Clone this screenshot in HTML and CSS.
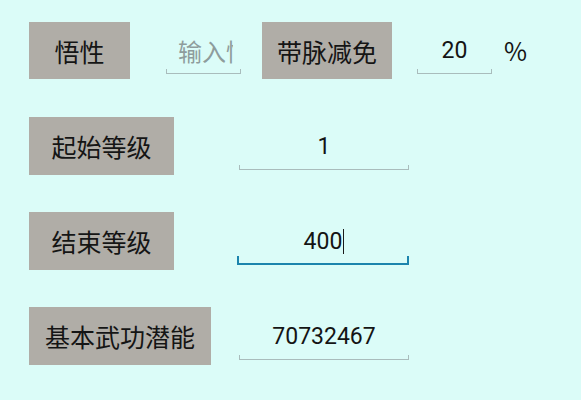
FILE: index.html
```html
<!DOCTYPE html>
<html lang="zh">
<head>
<meta charset="utf-8">
<link rel="stylesheet" href="styles.css">
</head>
<body>
<div class="page">
  <div class="row row-top">
    <div class="label w-101">悟性</div>
    <div class="field field-short field-left"><span class="placeholder">输入悟性</span></div>
    <div class="label w-130 label-second">带脉减免</div>
    <div class="field field-short field-pct">20</div>
    <span class="unit">%</span>
  </div>
  <div class="row row-grid">
    <div class="label w-145">起始等级</div>
    <div class="field field-long">1</div>
  </div>
  <div class="row row-grid">
    <div class="label w-145">结束等级</div>
    <div class="field field-long field-focus">400<span class="caret"></span></div>
  </div>
  <div class="row row-grid">
    <div class="label w-182">基本武功潜能</div>
    <div class="field field-long">70732467</div>
  </div>
</div>
</body>
</html>
```
FILE: styles.css
```css
html, body {
  margin: 0;
  padding: 0;
  background: #dbfcf8;
}
body {
  width: 581px;
  height: 400px;
  overflow: hidden;
  font-family: Roboto, "Noto Sans CJK SC", sans-serif;
  color: #141414;
}
.page {
  padding: 22px 0 0 29px;
  display: flex;
  flex-direction: column;
  gap: 37px;
}
.row {
  height: 58px;
  display: flex;
  align-items: center;
}
.row-top .label { height: 57px; align-self: flex-start; }
.row-grid {
  display: grid;
  grid-template-columns: 210px 170px;
  align-items: center;
}
.label {
  height: 58px;
  background: #b0ada7;
  display: flex;
  align-items: center;
  justify-content: center;
  font-family: "Noto Sans CJK SC", sans-serif;
  font-size: 25px;
  color: #151515;
}
.w-101 { width: 101px; }
.w-130 { width: 130px; }
.w-145 { width: 145px; }
.w-182 { width: 182px; }
.label-second { margin-left: 21px; }

.field {
  position: relative;
  height: 47px;
  display: flex;
  align-items: center;
  justify-content: center;
  font-size: 23px;
  box-sizing: border-box;
}
.field::after {
  content: "";
  position: absolute;
  left: 0;
  right: 0;
  bottom: 0;
  height: 4px;
  border: 1px solid #a9bcbc;
  border-top: none;
}
.field-short { width: 75px; }
.field-long { width: 170px; }
.field-left {
  margin-left: 36px;
  justify-content: flex-start;
  padding-left: 12px;
  padding-right: 8px;
  overflow: hidden;
  white-space: nowrap;
}
.row-top .field { margin-top: -2px; }
.placeholder {
  font-family: "Noto Sans CJK SC", sans-serif;
  font-size: 24px;
  color: #8e9c9c;
  overflow: hidden;
}
.field-pct { margin-left: 25px; }
.unit {
  margin-left: 12px;
  font-family: "Noto Sans CJK SC", sans-serif;
  font-size: 25px;
  margin-top: -2px;
}
.field-focus::after {
  left: -2px;
  height: 7px;
  border: 2px solid #1c84ad;
  border-top: none;
}
.caret {
  display: inline-block;
  width: 1px;
  height: 25px;
  background: #1a1a1a;
  margin-left: 1px;
}
```
